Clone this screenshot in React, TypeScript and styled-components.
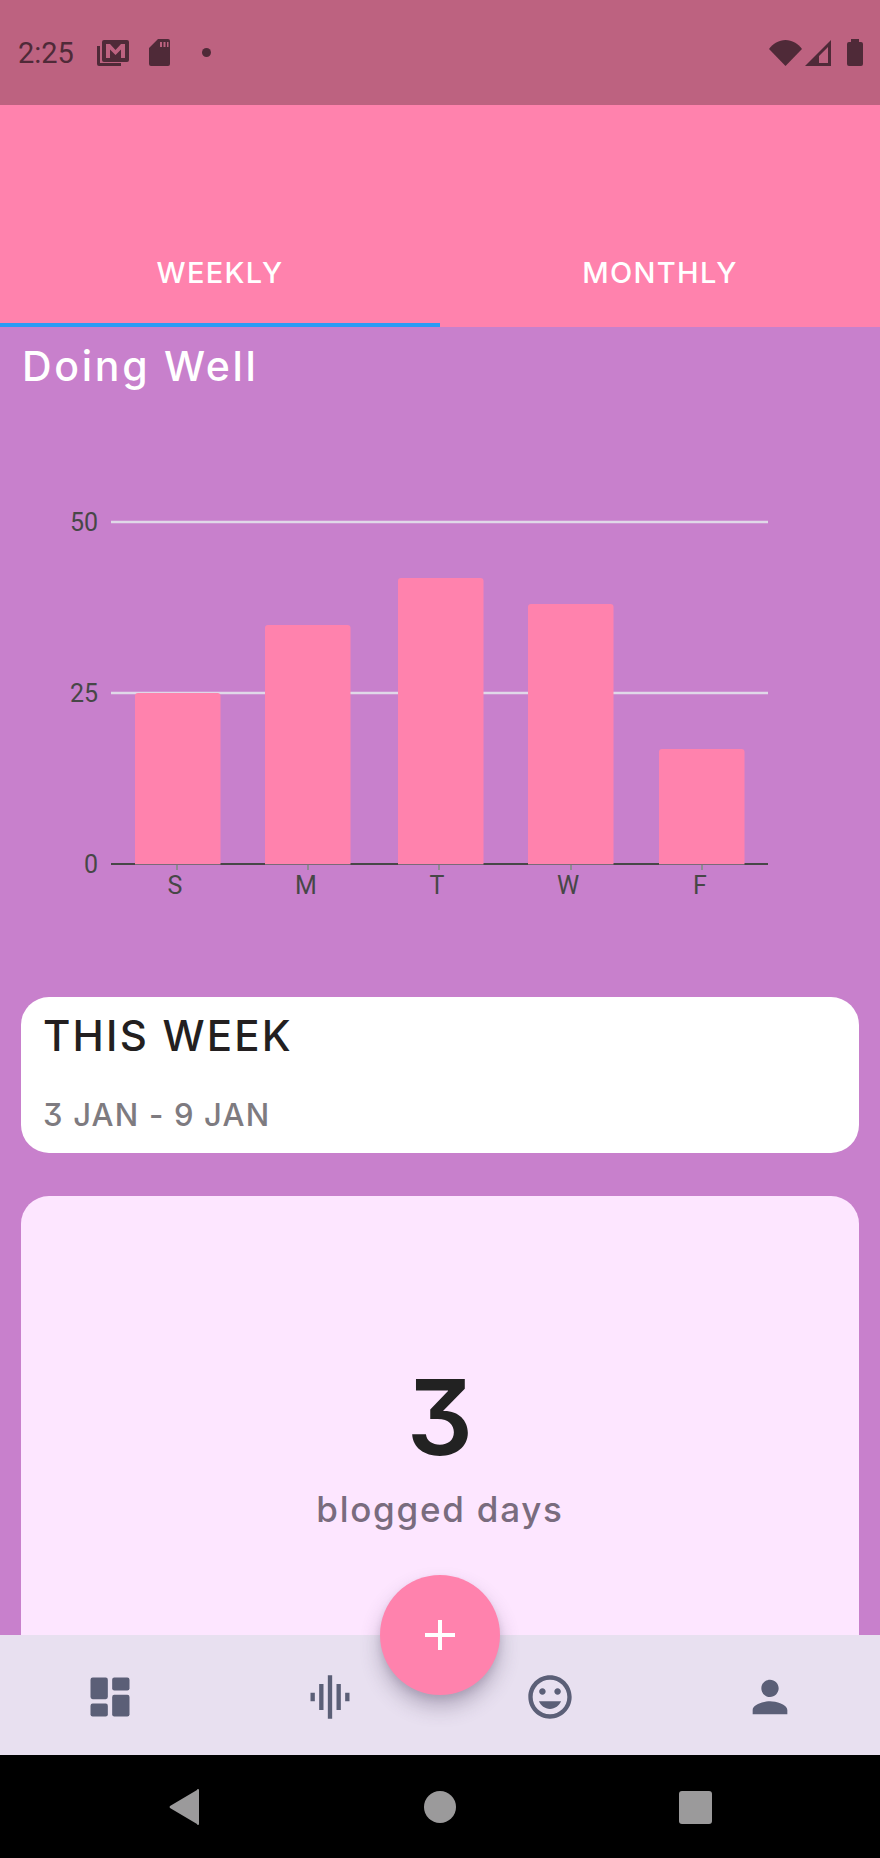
import React from "react";
import styled, { createGlobalStyle } from "styled-components";

const GlobalStyle = createGlobalStyle`
	html, body {
		margin: 0;
		padding: 0;
		background: #000;
	}
`;

const Screen = styled.div`
	position: relative;
	display: flex;
	flex-direction: column;
	width: 880px;
	height: 1858px;
	overflow: hidden;
	background: #c880cc;
	font-family: Inter, "Noto Sans", sans-serif;
	font-feature-settings: "cv09";
`;

const StatusBar = styled.div`
	display: flex;
	align-items: center;
	flex: 0 0 105px;
	padding: 0 17px 0 18px;
	box-sizing: border-box;
	background: #bd6280;
	color: #4f2a38;
`;

const Clock = styled.span`
	font-family: Roboto, sans-serif;
	font-size: 29px;
	line-height: 34px;
	margin-right: 23px;
`;

const StatusIcon = styled.svg<{ $gap?: number }>`
	display: block;
	fill: currentColor;
	margin-right: ${(p) => p.$gap ?? 0}px;
`;

const StatusSpacer = styled.div`
	flex: 1;
`;

const TabBar = styled.div`
	display: flex;
	align-items: flex-end;
	flex: 0 0 222px;
	background: #ff82ad;
`;

const Tab = styled.div<{ $active?: boolean }>`
	flex: 1;
	height: 110px;
	box-sizing: border-box;
	line-height: 112px;
	text-align: center;
	color: #fff;
	font-size: 29px;
	font-weight: 500;
	letter-spacing: 1.3px;
	border-bottom: 4px solid ${(p) => (p.$active ? "#2b9bf4" : "transparent")};
`;

const Content = styled.div`
	flex: 1;
	min-height: 0;
	overflow: hidden;
	padding: 0 21px;
`;

const Heading = styled.h1`
	margin: 0;
	padding: 14px 0 0 1px;
	color: #fff;
	font-size: 41px;
	line-height: 50px;
	font-weight: 500;
	letter-spacing: 2.7px;
`;

const ChartSvg = styled.svg`
	display: block;
	margin-left: -21px;
	margin-top: 76px;
`;

const AxisLabel = styled.text`
	font-family: Roboto, sans-serif;
	font-size: 25px;
	fill: #474747;
`;

const WeekCard = styled.div`
	margin-top: 77px;
	height: 156px;
	box-sizing: border-box;
	padding: 15px 22px;
	background: #fff;
	border-radius: 28px;
`;

const WeekTitle = styled.div`
	color: #231f20;
	font-size: 42px;
	line-height: 48px;
	font-weight: 500;
	letter-spacing: 2.2px;
`;

const WeekRange = styled.div`
	margin-top: 37px;
	color: #7e7b80;
	font-size: 31px;
	line-height: 36px;
	font-weight: 500;
	letter-spacing: 1.2px;
`;

const DaysCard = styled.div`
	display: flex;
	flex-direction: column;
	align-items: center;
	margin-top: 43px;
	height: 520px;
	box-sizing: border-box;
	padding-top: 158px;
	background: #fde6ff;
	border-radius: 28px;
`;

const DaysValue = styled.div`
	color: #222;
	font-size: 104px;
	line-height: 126px;
	font-weight: 600;
`;

const DaysLabel = styled.div`
	margin-top: 8px;
	color: #796c7e;
	font-size: 35px;
	line-height: 42px;
	font-weight: 500;
	letter-spacing: 1.75px;
`;

const BottomNav = styled.div`
	display: grid;
	grid-template-columns: repeat(4, 220px);
	flex: 0 0 120px;
	background: #e8e0f0;
`;

const NavItem = styled.div`
	display: flex;
	align-items: center;
	justify-content: center;
	padding-top: 3px;
	color: #5b5f77;
`;

const NavIcon = styled.svg`
	display: block;
	width: 52px;
	height: 52px;
	fill: currentColor;
`;

const Fab = styled.button`
	position: absolute;
	left: 380px;
	top: 1575px;
	display: flex;
	align-items: center;
	justify-content: center;
	width: 120px;
	height: 120px;
	padding: 0;
	border: 0;
	border-radius: 50%;
	background: #ff82ad;
	box-shadow: 0 12px 20px rgba(70, 60, 90, 0.32), 0 4px 6px rgba(70, 60, 90, 0.12);
`;

const SystemNav = styled.div`
	display: flex;
	align-items: center;
	justify-content: center;
	gap: 221px;
	flex: 0 0 103px;
	background: #000;
	color: #9b9a9b;
`;

const SystemIcon = styled.svg`
	display: block;
	width: 34px;
	height: 36px;
	fill: currentColor;
`;

const gridLines = [
	{ y: 522, label: "50" },
	{ y: 693, label: "25" }
];

const bars = [
	{ day: "S", x: 135, top: 693, tick: 177, labelX: 175 },
	{ day: "M", x: 265, top: 625, tick: 308, labelX: 306 },
	{ day: "T", x: 398, top: 578, tick: 439, labelX: 437 },
	{ day: "W", x: 528, top: 604, tick: 571, labelX: 568 },
	{ day: "F", x: 659, top: 749, tick: 702, labelX: 700 }
];

// chart svg starts at this page y, so the numbers above can stay in page coordinates
const CHART_TOP = 467;

const Chart = () => (
	<ChartSvg width={880} height={453} viewBox={`0 ${CHART_TOP} 880 453`}>
		{gridLines.map((line) => (
			<g key={line.label}>
				<rect x={111} y={line.y - 1.25} width={657} height={2.5} fill="#e0d8e8" />
				<AxisLabel x={98} y={line.y + 9} textAnchor="end">
					{line.label}
				</AxisLabel>
			</g>
		))}
		<rect x={111} y={863} width={657} height={2} fill="#474747" />
		<AxisLabel x={98} y={873} textAnchor="end">
			0
		</AxisLabel>
		{bars.map((bar) => (
			<g key={bar.day}>
				<path
					d={`M${bar.x} 864V${bar.top + 3}q0-3 3-3h79.500q3 0 3 3V864z`}
					fill="#ff82ad"
				/>
				<rect x={bar.x} y={864} width={85.5} height={1} fill="#7a6a78" />
				<rect x={bar.tick - 1} y={865} width={2} height={5} fill="#8f8a90" />
				<AxisLabel x={bar.labelX} y={894} textAnchor="middle">
					{bar.day}
				</AxisLabel>
			</g>
		))}
	</ChartSvg>
);

export default function App() {
	return (
		<>
			<GlobalStyle />
			<Screen>
				<StatusBar>
					<Clock>2:25</Clock>
					<StatusIcon $gap={20} width={32} height={26} viewBox="0 0 32 26">
						<path d="M0 6h3v17h21v3H2a2 2 0 0 1-2-2z" />
						<path
							fillRule="evenodd"
							d="M7 0h23a2 2 0 0 1 2 2v18a2 2 0 0 1-2 2H7a2 2 0 0 1-2-2V2a2 2 0 0 1 2-2zm2 4v14h4V9.500l5.500 5.500L24 9.500V18h4V4h-4l-5.500 6L13 4z"
						/>
					</StatusIcon>
					<StatusIcon $gap={32} width={21} height={27} viewBox="0 0 21 27">
						<path
							fillRule="evenodd"
							d="M9 0h10a2 2 0 0 1 2 2v23a2 2 0 0 1-2 2H2a2 2 0 0 1-2-2V9zm2 3v5h2V3zm3.500 0v5h2V3zM18 3v5h1.500V3z"
						/>
					</StatusIcon>
					<StatusIcon width={9} height={9} viewBox="0 0 9 9">
						<circle cx={4.5} cy={4.5} r={4.5} />
					</StatusIcon>
					<StatusSpacer />
					<StatusIcon $gap={3} width={33} height={26} viewBox="0 0 33 26">
						<path d="M16.500 26 0 9C4 3.500 10 0 16.500 0S29 3.500 33 9z" />
					</StatusIcon>
					<StatusIcon $gap={16} width={26} height={26} viewBox="0 0 26 26">
						<path fillRule="evenodd" d="M26 0v26H0zM23 7l-9 9v7h9z" />
					</StatusIcon>
					<StatusIcon width={16} height={27} viewBox="0 0 16 27">
						<path d="M4 0h8v3h2a2 2 0 0 1 2 2v20a2 2 0 0 1-2 2H2a2 2 0 0 1-2-2V5a2 2 0 0 1 2-2h2z" />
					</StatusIcon>
				</StatusBar>
				<TabBar>
					<Tab $active>WEEKLY</Tab>
					<Tab>MONTHLY</Tab>
				</TabBar>
				<Content>
					<Heading>Doing Well</Heading>
					<Chart />
					<WeekCard>
						<WeekTitle>THIS WEEK</WeekTitle>
						<WeekRange>3 JAN - 9 JAN</WeekRange>
					</WeekCard>
					<DaysCard>
						<DaysValue>3</DaysValue>
						<DaysLabel>blogged days</DaysLabel>
					</DaysCard>
				</Content>
				<BottomNav>
					<NavItem>
						<NavIcon viewBox="0 0 24 24">
							<rect x={3} y={3} width={8} height={10} rx={1} />
							<rect x={13} y={3} width={8} height={6} rx={1} />
							<rect x={3} y={15} width={8} height={6} rx={1} />
							<rect x={13} y={11} width={8} height={10} rx={1} />
						</NavIcon>
					</NavItem>
					<NavItem>
						<NavIcon viewBox="0 0 24 24">
							<path d="M7 18h2V6H7v12zm4 4h2V2h-2v20zm-8-8h2v-4H3v4zm12 4h2V6h-2v12zm4-8v4h2v-4h-2z" />
						</NavIcon>
					</NavItem>
					<NavItem>
						<NavIcon viewBox="0 0 24 24">
							<path d="M11.990 2C6.470 2 2 6.480 2 12s4.470 10 9.990 10C17.520 22 22 17.520 22 12S17.520 2 11.990 2zM12 20c-4.420 0-8-3.580-8-8s3.580-8 8-8 8 3.580 8 8-3.580 8-8 8zm3.500-9c.83 0 1.500-.67 1.500-1.500S16.330 8 15.500 8 14 8.670 14 9.500s.67 1.500 1.500 1.500zm-7 0c.83 0 1.500-.67 1.500-1.500S9.330 8 8.500 8 7 8.670 7 9.500 7.670 11 8.500 11zm3.500 6.500c2.330 0 4.310-1.460 5.110-3.500H6.890c.8 2.040 2.780 3.500 5.110 3.500z" />
						</NavIcon>
					</NavItem>
					<NavItem>
						<NavIcon viewBox="0 0 24 24">
							<path d="M12 12c2.210 0 4-1.790 4-4s-1.790-4-4-4-4 1.790-4 4 1.790 4 4 4zm0 2c-2.670 0-8 1.340-8 4v2h16v-2c0-2.660-5.330-4-8-4z" />
						</NavIcon>
					</NavItem>
				</BottomNav>
				<SystemNav>
					<SystemIcon viewBox="0 0 34 36">
						<path d="M31 1v34a1 1 0 0 1-2 0L2 19a1.500 1.500 0 0 1 0-2L29 1a1 1 0 0 1 2 0z" />
					</SystemIcon>
					<SystemIcon viewBox="0 0 34 36">
						<circle cx={17} cy={18} r={16} />
					</SystemIcon>
					<SystemIcon viewBox="0 0 34 36">
						<rect x={1} y={2} width={33} height={33} rx={3} />
					</SystemIcon>
				</SystemNav>
				<Fab aria-label="add">
					<svg width={30} height={30} viewBox="0 0 30 30" fill="#fff">
						<path d="M13 0h4v13h13v4H17v13h-4V17H0v-4h13z" />
					</svg>
				</Fab>
			</Screen>
		</>
	);
}
